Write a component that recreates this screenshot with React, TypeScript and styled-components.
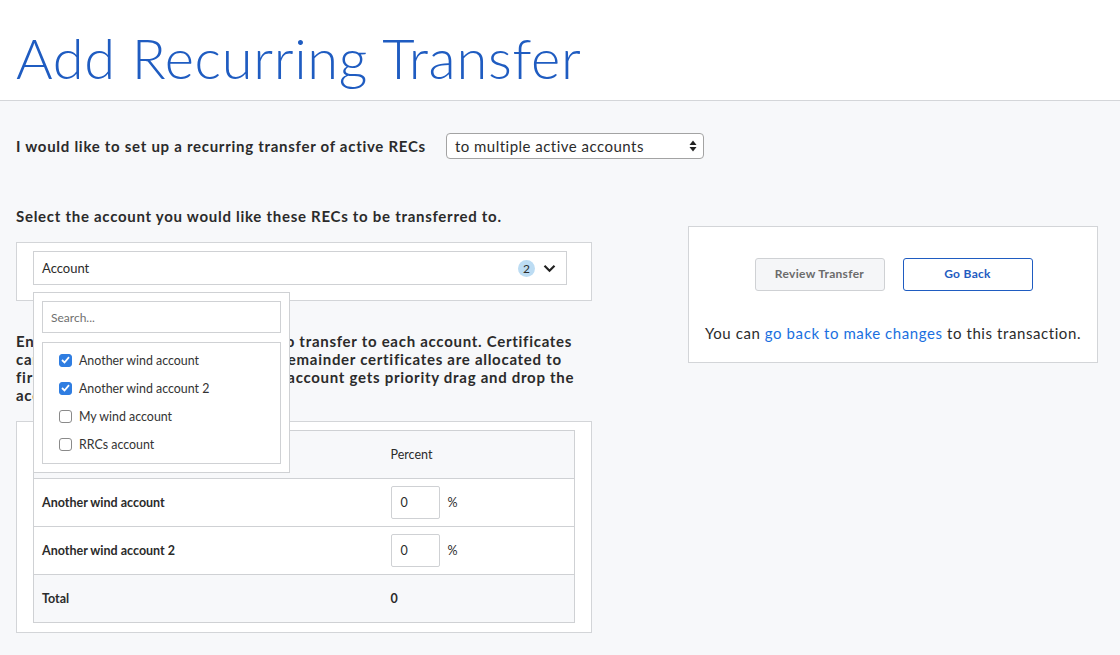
import React from "react";
import styled, { createGlobalStyle } from "styled-components";

const GlobalStyle = createGlobalStyle`
  html, body { margin: 0; padding: 0; }
  body {
    background: #f7f8fa;
    font-family: Lato, "Noto Sans", sans-serif;
    color: #2b2b2b;
    width: 1120px;
    min-height: 655px;
    overflow: hidden;
  }
  * { box-sizing: border-box; }
`;

const Header = styled.header`
  background: #fff;
  height: 101px;
  border-bottom: 1px solid #d4d6d9;
  padding: 30px 0 0 16px;
`;

const Title = styled.h1`
  margin: 0;
  font-family: Lato, sans-serif;
  font-weight: 300;
  font-size: 56px;
  line-height: 56px;
  color: #1f5cc1;
  letter-spacing: 0.7px;
`;

const Main = styled.main`
  padding: 32px 22px 0 16px;
`;

const IntroRow = styled.div`
  display: flex;
  align-items: center;
  gap: 20px;
`;

const Label = styled.span`
  font-weight: 700;
  font-size: 15px;
  letter-spacing: 0.72px;
  color: #2b2b2b;
`;

const SelectBox = styled.div`
  width: 258px;
  height: 26px;
  background: #fff;
  border: 1px solid #a3a3a3;
  border-radius: 4px;
  display: flex;
  align-items: center;
  justify-content: space-between;
  padding: 0 6px 0 8px;
  font-size: 15px;
  letter-spacing: 0.48px;
  color: #2b2b2b;
`;

const Columns = styled.div`
  display: grid;
  grid-template-columns: 576px 410px;
  column-gap: 96px;
  margin-top: 47px;
  align-items: start;
`;

const LeftCol = styled.div`
  display: flex;
  flex-direction: column;
`;

const Heading = styled.div`
  font-weight: 700;
  font-size: 15px;
  line-height: 20px;
  letter-spacing: 0.72px;
  color: #2b2b2b;
`;

const Panel = styled.div<{ $pad: string; $mt: number }>`
  background: #fff;
  border: 1px solid #d3d5d8;
  padding: ${(p) => p.$pad};
  margin-top: ${(p) => p.$mt}px;
`;

const AccountField = styled.div`
  position: relative;
`;

const AccountInput = styled.div`
  height: 34px;
  border: 1px solid #cfd1d4;
  display: flex;
  align-items: center;
  padding: 0 10px 0 8px;
  font-size: 13px;
  color: #2b2b2b;
`;

const Grow = styled.span`
  flex: 1;
`;

const Badge = styled.span`
  width: 17px;
  height: 17px;
  border-radius: 50%;
  background: #bcdcf3;
  color: #2b2b2b;
  font-size: 12px;
  display: inline-flex;
  align-items: center;
  justify-content: center;
  margin-right: 8px;
`;

const Dropdown = styled.div`
  position: absolute;
  top: 41px;
  left: 0;
  width: 257px;
  background: #fff;
  border: 1px solid #cfd1d4;
  padding: 8px;
  z-index: 5;
`;

const SearchInput = styled.div`
  height: 32px;
  border: 1px solid #cfd1d4;
  display: flex;
  align-items: center;
  padding-left: 8px;
  font-size: 12px;
  color: #6f6f6f;
`;

const OptionList = styled.div`
  margin-top: 9px;
  border: 1px solid #cfd1d4;
  padding: 3px 0 5px 16px;
`;

const Option = styled.div`
  height: 28px;
  display: flex;
  align-items: center;
  gap: 7px;
  font-size: 12.4px;
  color: #333;
`;

const Check = styled.span<{ $on: boolean }>`
  width: 13px;
  height: 13px;
  border-radius: 3px;
  border: 1px solid ${(p) => (p.$on ? "#2f7de1" : "#8a8a8a")};
  background: ${(p) => (p.$on ? "#2f7de1" : "#fff")};
  display: inline-flex;
  align-items: center;
  justify-content: center;
`;

const Paragraph = styled.p`
  margin: 31px 0 0;
  font-weight: 700;
  font-size: 15px;
  line-height: 18px;
  letter-spacing: 0.72px;
  color: #2b2b2b;
`;

const Table = styled.table`
  width: 100%;
  border-collapse: collapse;
  border: 1px solid #cfd1d4;
  font-size: 12.5px;
  color: #2b2b2b;
`;

const Tr = styled.tr<{ $shade?: boolean }>`
  height: 48px;
  background: ${(p) => (p.$shade ? "#f7f8fa" : "#fff")};
  border-top: 1px solid #cfd1d4;
`;

const Th = styled.th`
  text-align: left;
  font-weight: 400;
  padding: 0 8px;
`;

const Td = styled.td<{ $w?: string }>`
  font-weight: 700;
  padding: 0 8px;
  width: ${(p) => p.$w || "auto"};
`;

const PercentCell = styled.div`
  display: flex;
  align-items: center;
  gap: 8px;
  font-weight: 400;
`;

const NumInput = styled.div`
  width: 49px;
  height: 33px;
  border: 1px solid #cfd1d4;
  border-radius: 2px;
  display: flex;
  align-items: center;
  padding-left: 9px;
  font-weight: 400;
`;

const SidePanel = styled.div`
  background: #fff;
  border: 1px solid #d3d5d8;
  margin-top: 20px;
  height: 137px;
  padding-top: 31px;
  display: flex;
  flex-direction: column;
  align-items: center;
`;

const Buttons = styled.div`
  display: flex;
  gap: 18px;
  margin-left: 1px;
`;

const Button = styled.button<{ $primary?: boolean }>`
  width: 130px;
  height: 33px;
  border-radius: 3px;
  padding: 0 0 2px;
  font-family: Lato, sans-serif;
  font-weight: 700;
  font-size: 12px;
  letter-spacing: 0.3px;
  background: ${(p) => (p.$primary ? "#fff" : "#f5f6f8")};
  border: 1px solid ${(p) => (p.$primary ? "#1f5cc1" : "#cfd1d4")};
  color: ${(p) => (p.$primary ? "#1f5cc1" : "#6b6b6b")};
`;

const Note = styled.p`
  margin: 33px 0 0;
  font-size: 15px;
  letter-spacing: 0.58px;
  color: #2b2b2b;
`;

const Link = styled.a`
  color: #1a6fe0;
  text-decoration: none;
`;

const accounts = [
  { name: "Another wind account", on: true },
  { name: "Another wind account 2", on: true },
  { name: "My wind account", on: false },
  { name: "RRCs account", on: false },
];

export default function App() {
  return (
    <>
      <GlobalStyle />
      <Header>
        <Title>Add Recurring Transfer</Title>
      </Header>
      <Main>
        <IntroRow>
          <Label>I would like to set up a recurring transfer of active RECs</Label>
          <SelectBox>
            <span>to multiple active accounts</span>
            <svg width="8" height="12" viewBox="0 0 8 12">
              <path d="M4 0.5 L7.5 5 H0.5 Z" fill="#222" />
              <path d="M4 11.5 L7.5 7 H0.5 Z" fill="#222" />
            </svg>
          </SelectBox>
        </IntroRow>
        <Columns>
          <LeftCol>
            <Heading>Select the account you would like these RECs to be transferred to.</Heading>
            <Panel $pad="8px 24px 15px 16px" $mt={16}>
              <AccountField>
                <AccountInput>
                  <Grow>Account</Grow>
                  <Badge>2</Badge>
                  <svg width="13" height="9" viewBox="0 0 13 9">
                    <path d="M1.5 1.8 L6.5 6.8 L11.5 1.8" fill="none" stroke="#222" strokeWidth="2.2" />
                  </svg>
                </AccountInput>
                <Dropdown>
                  <SearchInput>Search...</SearchInput>
                  <OptionList>
                    {accounts.map((a) => (
                      <Option key={a.name}>
                        <Check $on={a.on}>
                          {a.on && (
                            <svg width="9" height="8" viewBox="0 0 9 8">
                              <path d="M1 4 L3.5 6.5 L8 1.2" fill="none" stroke="#fff" strokeWidth="1.8" />
                            </svg>
                          )}
                        </Check>
                        <span>{a.name}</span>
                      </Option>
                    ))}
                  </OptionList>
                </Dropdown>
              </AccountField>
            </Panel>
            <Paragraph>
              Enter the percentages of your RECs to transfer to each account. Certificates can only be
              sent in whole numbers. Remainder certificates are allocated to first account listed. To
              change which account gets priority drag and drop the account rows.
            </Paragraph>
            <Panel $pad="8px 16px 9px" $mt={17}>
              <Table>
                <tbody>
                  <Tr $shade>
                    <Th>Account</Th>
                    <Th>Percent</Th>
                  </Tr>
                  <Tr>
                    <Td $w="349px">Another wind account</Td>
                    <Td>
                      <PercentCell>
                        <NumInput>0</NumInput>%
                      </PercentCell>
                    </Td>
                  </Tr>
                  <Tr>
                    <Td>Another wind account 2</Td>
                    <Td>
                      <PercentCell>
                        <NumInput>0</NumInput>%
                      </PercentCell>
                    </Td>
                  </Tr>
                  <Tr $shade>
                    <Td>Total</Td>
                    <Td>0</Td>
                  </Tr>
                </tbody>
              </Table>
            </Panel>
          </LeftCol>
          <SidePanel>
            <Buttons>
              <Button>Review Transfer</Button>
              <Button $primary>Go Back</Button>
            </Buttons>
            <Note>
              You can <Link href="#">go back to make changes</Link> to this transaction.
            </Note>
          </SidePanel>
        </Columns>
      </Main>
    </>
  );
}
